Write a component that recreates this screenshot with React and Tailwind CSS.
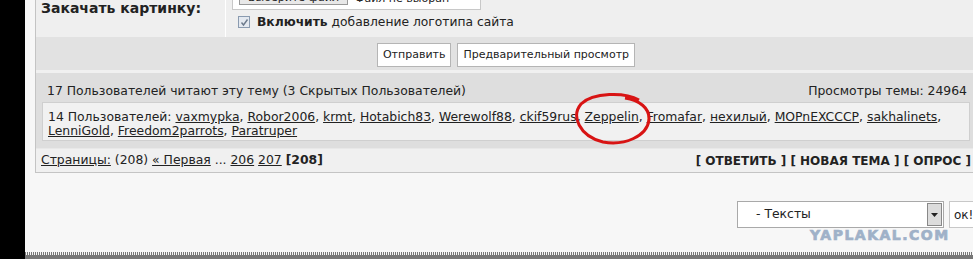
const users = [
  'vaxmypka', 'Robor2006', 'krmt', 'Hotabich83', 'Werewolf88', 'ckif59rus', 'Zeppelin',
  'Fromafar', 'нехилый', 'MOPnEXCCCP', 'sakhalinets', 'LenniGold', 'Freedom2parrots', 'Paratruper',
]

export default function App() {
  return (
    <div className="relative h-[259px] w-[973px] overflow-hidden bg-[#f7f7f7] font-['DejaVu_Sans',sans-serif] text-[12.4px] text-[#222]">
      <div className="flex h-full">
        <div className="w-[25px] shrink-0 bg-black" />
        <div className="flex min-w-0 flex-1 flex-col">
          {/* form table */}
          <div className="ml-[10px] w-[942px] shrink-0 border border-t-0 border-[#c4c4c4] bg-[#f0f0f0]">
            <div className="grid h-[37px] grid-cols-[189px_1fr] bg-[#efefef]">
              <div className="pl-[5px] text-[14px] font-bold leading-[16px]">Закачать картинку:</div>
              <div className="border-l border-white pl-[6px]">
                <div className="mt-[-13px] flex h-[23px] w-[249px] items-end gap-[7px] border border-[#c8c8c8] bg-white px-[6px] pb-[4px]">
                  <span className="border border-[#999] bg-[#e8e8e8] px-[8px] text-[11px] leading-[13px]">Выберите файл</span>
                  <span className="text-[11px] leading-[13px]">Файл не выбран</span>
                </div>
                <div className="mt-[4px] flex items-center gap-[7px] pl-[6px]">
                  <span className="flex h-[12px] w-[12px] items-center justify-center border border-[#8a9bb0] bg-[#e4e9f0]">
                    <svg width="9" height="9" viewBox="0 0 9 9">
                      <path d="M1.5 4.5 L3.5 7 L7.5 1.5" fill="none" stroke="#6c7a8c" strokeWidth="1.4" />
                    </svg>
                  </span>
                  <span className="text-[12.3px] leading-[16px]"><b>Включить</b> добавление логотипа сайта</span>
                </div>
              </div>
            </div>
            <div className="flex h-[33px] items-start justify-center gap-[6px] bg-[#e2e2e2] pt-[6px]">
              <button className="h-[24px] border border-[#b5b5b5] bg-white px-[5px] text-[11px]">Отправить</button>
              <button className="h-[24px] border border-[#b5b5b5] bg-white px-[5px] text-[11px]">Предварительный просмотр</button>
            </div>
            <div className="mt-[3px] bg-[#dedede] px-[6px] pb-[7px]">
              <div className="flex h-[29px] items-center justify-between pl-[5px] pr-[3px] pt-[7px]">
                <span>17 Пользователей читают эту тему (3 Скрытых Пользователей)</span>
                <span>Просмотры темы: 24964</span>
              </div>
              <div className="border border-[#cfcfcf] bg-[#f1f1f1] px-[5px] pb-[2px] pt-[7px] leading-[14px]">
                14 Пользователей:{' '}
                {users.map((u, i) => (
                  <span key={u}>
                    <a className="underline">{u}</a>
                    {i < users.length - 1 ? ', ' : ''}
                  </span>
                ))}
              </div>
            </div>
            <div className="flex h-[24px] items-center justify-between border-t border-[#e8e8e8] pl-[5px] pr-[5px]">
              <span>
                <a className="underline">Страницы:</a> (208) <a className="underline">« Первая</a> ...{' '}
                <a className="underline">206</a> <a className="underline">207</a> <b>[208]</b>
              </span>
              <b className="text-[12px]">[ ОТВЕТИТЬ ] [ НОВАЯ ТЕМА ] [ ОПРОС ]</b>
            </div>
          </div>

          {/* jump select */}
          <div className="mt-[28px] flex justify-end gap-[5px]">
            <div className="flex h-[27px] w-[207px] items-center justify-between border border-[#a9a9a9] bg-white pl-[18px] pr-[1px]">
              <span>- Тексты</span>
              <span className="flex h-[23px] w-[15px] items-center justify-center border border-[#888] bg-[#dcdcdc]">
                <svg width="7" height="4" viewBox="0 0 7 4"><path d="M0 0 H7 L3.5 4 Z" fill="#222" /></svg>
              </span>
            </div>
            <button className="mr-[-8px] h-[27px] w-[32px] border border-[#c8c8c8] bg-white pl-[4px] text-left text-[12px]">ок!</button>
          </div>

          <div className="flex-1" />
          <div className="h-[3px] bg-[repeating-linear-gradient(90deg,#777_0_1px,#f7f7f7_1px_2px)]" />
          <div className="h-[4px] bg-[#777]" />
        </div>
      </div>

      <span className="absolute left-[810px] top-[225px] text-[14px] font-bold tracking-[1.5px] text-[#9fb1c8] [-webkit-text-stroke:0.7px_#9fb1c8]">
        YAPLAKAL.COM
      </span>

      {/* red circle drawn over Zeppelin */}
      <svg className="absolute left-[573px] top-[92px]" width="80" height="54" viewBox="0 0 80 54">
        <path d="M66 8 C52 0 20 0 8 12 C-2 24 6 44 30 50 C52 54 74 44 76 28 C77 16 66 8 52 6" fill="none" stroke="#d81414" strokeWidth="3" />
      </svg>
    </div>
  )
}
